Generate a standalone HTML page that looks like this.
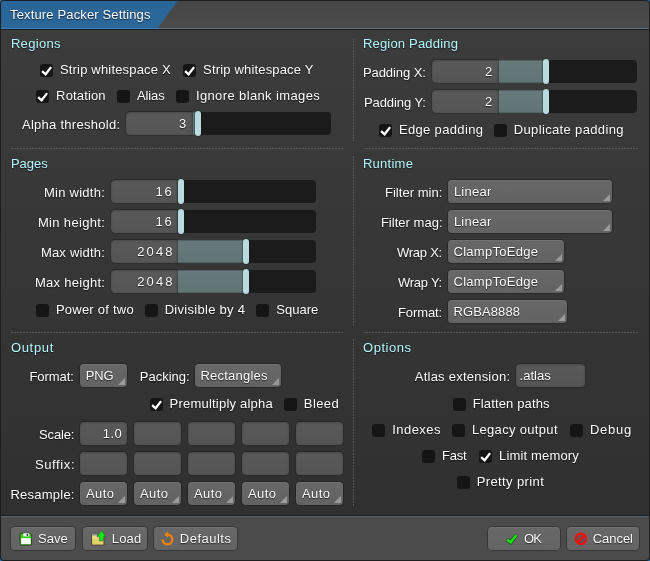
<!DOCTYPE html>
<html><head><meta charset="utf-8"><title>Texture Packer Settings</title>
<style>
html,body{margin:0;padding:0;background:#2c6ea6;}
body{width:650px;height:561px;position:relative;overflow:hidden;font-family:"Liberation Sans",sans-serif;font-size:13px;}
#win{position:absolute;left:0;top:0;width:650px;height:561px;background:#1e1e1e;border-radius:4px;overflow:hidden;}
#tb{position:absolute;left:1px;top:1px;width:648px;height:27px;background:linear-gradient(#464646,#4c4c4c);border-radius:3px 3px 0 0;}
#tbl{position:absolute;left:1px;top:28px;width:648px;height:1px;background:#626f7a;}
#tbb{position:absolute;left:0;top:0;width:180px;height:29px;}
#main{position:absolute;left:1px;top:30px;width:648px;height:485px;background:linear-gradient(#3c3c3c,#303030);}
#bar{position:absolute;left:1px;top:517px;width:648px;height:43px;background:#4b4b4b;border-radius:0 0 3px 3px;}
#barl{position:absolute;left:1px;top:516px;width:648px;height:1px;background:#59636b;}
.t{position:absolute;white-space:pre;line-height:16px;height:16px;color:#ffffff;text-shadow:0 1px 1px rgba(0,0,0,.6),0 0 1px rgba(0,0,0,.45);}
.cb{position:absolute;background:#151515;border-radius:3px;}
.cb svg{display:block}
.trk{position:absolute;background:#1b1b1b;border-radius:4px;}
.fil{position:absolute;background:linear-gradient(#67797b,#617576);box-shadow:inset 0 1px 0 #526263,inset 0 -1px 0 #526263;}
.inp{position:absolute;background:linear-gradient(#595959,#555555);border-radius:4px;box-shadow:0 0 0 1px rgba(0,0,0,.14),0 -1px 0 0 rgba(0,0,0,.12),inset 0 1px 2px rgba(0,0,0,.14),inset 0 0 2px rgba(0,0,0,.10);}
.inp.sl{border-radius:4px 0 0 4px;box-shadow:0 0 0 1px rgba(0,0,0,.14),0 -1px 0 0 rgba(0,0,0,.12),inset 0 1px 2px rgba(0,0,0,.14),inset 0 0 2px rgba(0,0,0,.10),1px 0 0 0 rgba(0,0,0,.28);}
.knb{position:absolute;background:#badadf;border-radius:3px;box-shadow:0 0 1px 0.5px rgba(20,30,30,.6);}
.sel{position:absolute;background:linear-gradient(#676767,#636363);border-radius:4px;box-shadow:0 0 0 1px rgba(0,0,0,.24),inset 0 1px 0 rgba(255,255,255,.07);}
.sel i{position:absolute;right:2px;bottom:2px;width:0;height:0;border-left:7px solid transparent;border-bottom:7px solid #9b9b9b;}
.btn{position:absolute;background:linear-gradient(#686868,#646464);border-radius:4px;box-shadow:0 0 0 1px rgba(0,0,0,.26),inset 0 1px 0 rgba(255,255,255,.07);}
.hd{position:absolute;height:1px;background-image:linear-gradient(90deg,#5a5a5a 0,#5a5a5a 66.66%,transparent 66.67%);background-size:3px 1px;}
.vd{position:absolute;width:1px;background-image:linear-gradient(180deg,#5a5a5a 0,#5a5a5a 66.66%,transparent 66.67%);background-size:1px 3px;}
.ic{position:absolute;}
#tx{position:absolute;left:0;top:0;width:650px;height:561px;will-change:transform;}
</style></head>
<body>
<div id="win">
<div id="tb"></div>
<svg id="tbb" viewBox="0 0 180 29"><path d="M1 4 Q1 1 4 1 H177.5 L158 28 H1 Z" fill="#2a6698"/><path d="M1 28 H158 L157.3 29 H1 Z" fill="#3a84c2"/></svg>
<div id="tbl"></div>
<svg style="position:absolute;left:0;top:28px" width="160" height="1"><rect x="1" y="0" width="157.5" height="1" fill="#3a84c2"/></svg>
<div id="main"></div>
<div id="barl"></div>
<div id="bar"></div>
<div class="cb" style="left:40px;top:64px;width:13px;height:13px;"><svg width="13" height="13" viewBox="0 0 13 13"><path d="M2.1 7.1 L5.6 10.3 L11.1 3.1" fill="none" stroke="#fff" stroke-width="2.3" stroke-linecap="butt" stroke-linejoin="miter"/></svg></div>
<div class="cb" style="left:183px;top:64px;width:13px;height:13px;"><svg width="13" height="13" viewBox="0 0 13 13"><path d="M2.1 7.1 L5.6 10.3 L11.1 3.1" fill="none" stroke="#fff" stroke-width="2.3" stroke-linecap="butt" stroke-linejoin="miter"/></svg></div>
<div class="cb" style="left:36px;top:90px;width:13px;height:13px;"><svg width="13" height="13" viewBox="0 0 13 13"><path d="M2.1 7.1 L5.6 10.3 L11.1 3.1" fill="none" stroke="#fff" stroke-width="2.3" stroke-linecap="butt" stroke-linejoin="miter"/></svg></div>
<div class="cb" style="left:117px;top:90px;width:13px;height:13px;"></div>
<div class="cb" style="left:176px;top:90px;width:13px;height:13px;"></div>
<div class="trk" style="left:126px;top:112px;width:205px;height:23px;"></div>
<div class="fil" style="left:192px;top:112px;width:6px;height:23px;"></div>
<div class="inp sl" style="left:126px;top:112px;width:66px;height:23px;"></div>
<div class="knb" style="left:195px;top:111px;width:6px;height:25px;"></div>
<div class="trk" style="left:111px;top:180px;width:205px;height:23px;"></div>
<div class="fil" style="left:177px;top:180px;width:4px;height:23px;"></div>
<div class="inp sl" style="left:111px;top:180px;width:66px;height:23px;"></div>
<div class="knb" style="left:178px;top:179px;width:6px;height:25px;"></div>
<div class="trk" style="left:111px;top:210px;width:205px;height:23px;"></div>
<div class="fil" style="left:177px;top:210px;width:4px;height:23px;"></div>
<div class="inp sl" style="left:111px;top:210px;width:66px;height:23px;"></div>
<div class="knb" style="left:178px;top:209px;width:6px;height:25px;"></div>
<div class="trk" style="left:111px;top:240px;width:205px;height:23px;"></div>
<div class="fil" style="left:177px;top:240px;width:69px;height:23px;"></div>
<div class="inp sl" style="left:111px;top:240px;width:66px;height:23px;"></div>
<div class="knb" style="left:243px;top:239px;width:6px;height:25px;"></div>
<div class="trk" style="left:111px;top:270px;width:205px;height:23px;"></div>
<div class="fil" style="left:177px;top:270px;width:69px;height:23px;"></div>
<div class="inp sl" style="left:111px;top:270px;width:66px;height:23px;"></div>
<div class="knb" style="left:243px;top:269px;width:6px;height:25px;"></div>
<div class="cb" style="left:36px;top:304px;width:13px;height:13px;"></div>
<div class="cb" style="left:145px;top:304px;width:13px;height:13px;"></div>
<div class="cb" style="left:256px;top:304px;width:13px;height:13px;"></div>
<div class="sel" style="left:80px;top:364px;width:47px;height:23px;"><i></i></div>
<div class="sel" style="left:195px;top:364px;width:86px;height:23px;"><i></i></div>
<div class="cb" style="left:150px;top:398px;width:13px;height:13px;"><svg width="13" height="13" viewBox="0 0 13 13"><path d="M2.1 7.1 L5.6 10.3 L11.1 3.1" fill="none" stroke="#fff" stroke-width="2.3" stroke-linecap="butt" stroke-linejoin="miter"/></svg></div>
<div class="cb" style="left:284px;top:398px;width:13px;height:13px;"></div>
<div class="inp" style="left:80px;top:422px;width:47px;height:23px;"></div>
<div class="inp" style="left:80px;top:452px;width:47px;height:23px;"></div>
<div class="sel" style="left:80px;top:482px;width:47px;height:23px;"><i></i></div>
<div class="inp" style="left:134px;top:422px;width:47px;height:23px;"></div>
<div class="inp" style="left:134px;top:452px;width:47px;height:23px;"></div>
<div class="sel" style="left:134px;top:482px;width:47px;height:23px;"><i></i></div>
<div class="inp" style="left:188px;top:422px;width:47px;height:23px;"></div>
<div class="inp" style="left:188px;top:452px;width:47px;height:23px;"></div>
<div class="sel" style="left:188px;top:482px;width:47px;height:23px;"><i></i></div>
<div class="inp" style="left:242px;top:422px;width:47px;height:23px;"></div>
<div class="inp" style="left:242px;top:452px;width:47px;height:23px;"></div>
<div class="sel" style="left:242px;top:482px;width:47px;height:23px;"><i></i></div>
<div class="inp" style="left:296px;top:422px;width:47px;height:23px;"></div>
<div class="inp" style="left:296px;top:452px;width:47px;height:23px;"></div>
<div class="sel" style="left:296px;top:482px;width:47px;height:23px;"><i></i></div>
<div class="trk" style="left:432px;top:60px;width:205px;height:23px;"></div>
<div class="fil" style="left:498px;top:60px;width:48px;height:23px;"></div>
<div class="inp sl" style="left:432px;top:60px;width:66px;height:23px;"></div>
<div class="knb" style="left:543px;top:59px;width:6px;height:25px;"></div>
<div class="trk" style="left:432px;top:90px;width:205px;height:23px;"></div>
<div class="fil" style="left:498px;top:90px;width:48px;height:23px;"></div>
<div class="inp sl" style="left:432px;top:90px;width:66px;height:23px;"></div>
<div class="knb" style="left:543px;top:89px;width:6px;height:25px;"></div>
<div class="cb" style="left:379px;top:124px;width:13px;height:13px;"><svg width="13" height="13" viewBox="0 0 13 13"><path d="M2.1 7.1 L5.6 10.3 L11.1 3.1" fill="none" stroke="#fff" stroke-width="2.3" stroke-linecap="butt" stroke-linejoin="miter"/></svg></div>
<div class="cb" style="left:494px;top:124px;width:13px;height:13px;"></div>
<div class="sel" style="left:448px;top:180px;width:164px;height:23px;"><i></i></div>
<div class="sel" style="left:448px;top:210px;width:164px;height:23px;"><i></i></div>
<div class="sel" style="left:448px;top:240px;width:116px;height:23px;"><i></i></div>
<div class="sel" style="left:448px;top:270px;width:116px;height:23px;"><i></i></div>
<div class="sel" style="left:448px;top:300px;width:119px;height:23px;"><i></i></div>
<div class="inp" style="left:516px;top:364px;width:69px;height:23px;"></div>
<div class="cb" style="left:453px;top:398px;width:13px;height:13px;"></div>
<div class="cb" style="left:372px;top:424px;width:13px;height:13px;"></div>
<div class="cb" style="left:452px;top:424px;width:13px;height:13px;"></div>
<div class="cb" style="left:570px;top:424px;width:13px;height:13px;"></div>
<div class="cb" style="left:422px;top:450px;width:13px;height:13px;"></div>
<div class="cb" style="left:479px;top:450px;width:13px;height:13px;"><svg width="13" height="13" viewBox="0 0 13 13"><path d="M2.1 7.1 L5.6 10.3 L11.1 3.1" fill="none" stroke="#fff" stroke-width="2.3" stroke-linecap="butt" stroke-linejoin="miter"/></svg></div>
<div class="cb" style="left:457px;top:476px;width:13px;height:13px;"></div>
<div class="btn" style="left:11px;top:527px;width:64px;height:23px;"></div>
<div class="btn" style="left:83px;top:527px;width:64px;height:23px;"></div>
<div class="btn" style="left:154px;top:527px;width:83px;height:23px;"></div>
<div class="btn" style="left:488px;top:527px;width:72px;height:23px;"></div>
<div class="btn" style="left:567px;top:527px;width:72px;height:23px;"></div>
<div class="hd" style="left:11px;top:148px;width:332px;background-position:0px 0"></div>
<div class="hd" style="left:364px;top:148px;width:274px;background-position:-1px 0"></div>
<div class="hd" style="left:11px;top:332px;width:332px;background-position:0px 0"></div>
<div class="hd" style="left:364px;top:332px;width:274px;background-position:-1px 0"></div>
<div class="vd" style="left:353px;top:39px;height:102px;background-position:0 -1px"></div>
<div class="vd" style="left:353px;top:156px;height:170px;background-position:0 0px"></div>
<div class="vd" style="left:353px;top:339px;height:168px;background-position:0 0px"></div>

<svg class="ic" style="left:19px;top:531.6px" width="15" height="15" viewBox="0 0 15 15">
<path d="M2.1 1.3 H11 L12.6 2.9 V13.1 H1.1 V2.3 Q1.1 1.3 2.1 1.3 Z" fill="#3cd01c" stroke="#26421f" stroke-width="1"/>
<rect x="2.1" y="6.2" width="9.6" height="5.9" fill="#ffffff"/>
<rect x="4.3" y="1.2" width="5.9" height="3.2" fill="#f0f0f0"/>
<rect x="7.7" y="1.8" width="1.4" height="2.2" fill="#2a4a2a"/>
</svg>
<svg class="ic" style="left:90px;top:529px" width="18" height="18" viewBox="0 0 18 18">
<path d="M1.6 5.6 H7 V6.6 H14 V16.1 H1.6 Z" fill="#ddd36a" stroke="#45453a" stroke-width="1"/>
<rect x="2.1" y="6.6" width="11.4" height="3" fill="#e9e081"/>
<rect x="2" y="5" width="5" height="1.4" fill="#8a8fb0"/>
<path d="M11.4 1.5 L16 7.8 H13.3 V11.8 H9.6 V7.8 H7 Z" fill="#12ee12" stroke="#2a5a2a" stroke-width="0.6"/>
</svg>
<svg class="ic" style="left:160px;top:530px" width="16" height="17" viewBox="0 0 16 17">
<path d="M7.5 4.7 A4.8 4.8 0 1 1 2.7 9.5" fill="none" stroke="#ff8000" stroke-width="2.2"/>
<path d="M8.1 1.4 L4.1 4.7 L8.1 7.5 Z" fill="#ff8000"/>
</svg>
<svg class="ic" style="left:504px;top:532px" width="16" height="14" viewBox="0 0 16 14">
<path d="M3 7.2 L6.7 10.5 L12.6 2.8" fill="none" stroke="#1c4a1c" stroke-width="3.8"/>
<path d="M3.2 7.4 L6.7 10.4 L12.4 3.0" fill="none" stroke="#14e014" stroke-width="2.7"/>
</svg>
<svg class="ic" style="left:574px;top:532px" width="14" height="14" viewBox="0 0 14 14">
<circle cx="7" cy="6.8" r="5.2" fill="#585858" stroke="#ff0a0a" stroke-width="2.2"/>
<path d="M3.4 10.4 L10.6 3.2" stroke="#ff0a0a" stroke-width="2.2"/>
</svg>

<div id="tx">
<span class="t ttl" style="left:10.1px;top:7.0px;letter-spacing:0.14px;">Texture Packer Settings</span>
<span class="t" style="left:10.9px;top:36.0px;letter-spacing:0.32px;color:#b6fbff;">Regions</span>
<span class="t" style="left:60.0px;top:62.0px;letter-spacing:0.17px;">Strip whitespace X</span>
<span class="t" style="left:203.1px;top:62.0px;letter-spacing:0.17px;">Strip whitespace Y</span>
<span class="t" style="left:56.1px;top:88.0px;letter-spacing:0.15px;">Rotation</span>
<span class="t" style="left:137.0px;top:88.0px;letter-spacing:-0.12px;">Alias</span>
<span class="t" style="left:195.9px;top:88.0px;letter-spacing:0.38px;">Ignore blank images</span>
<span class="t" style="left:22.0px;top:117.0px;letter-spacing:0.27px;">Alpha threshold:</span>
<span class="t" style="left:179.0px;top:116.0px;">3</span>
<span class="t" style="left:10.9px;top:156.0px;letter-spacing:0.03px;color:#b6fbff;">Pages</span>
<span class="t" style="left:43.9px;top:185.0px;letter-spacing:0.27px;">Min width:</span>
<span class="t" style="left:37.9px;top:215.0px;letter-spacing:0.34px;">Min height:</span>
<span class="t" style="left:40.9px;top:245.0px;letter-spacing:0.21px;">Max width:</span>
<span class="t" style="left:35.0px;top:275.0px;letter-spacing:0.27px;">Max height:</span>
<span class="t" style="left:155.5px;top:184.0px;letter-spacing:1.83px;">16</span>
<span class="t" style="left:155.5px;top:214.0px;letter-spacing:1.83px;">16</span>
<span class="t" style="left:137.3px;top:244.0px;letter-spacing:2.09px;">2048</span>
<span class="t" style="left:137.3px;top:274.0px;letter-spacing:2.09px;">2048</span>
<span class="t" style="left:55.9px;top:302.0px;letter-spacing:0.24px;">Power of two</span>
<span class="t" style="left:164.7px;top:302.0px;letter-spacing:0.29px;">Divisible by 4</span>
<span class="t" style="left:276.2px;top:302.0px;letter-spacing:0.04px;">Square</span>
<span class="t" style="left:10.9px;top:340.0px;letter-spacing:0.69px;color:#b6fbff;">Output</span>
<span class="t" style="left:29.5px;top:369.0px;letter-spacing:-0.07px;">Format:</span>
<span class="t" style="left:85.7px;top:368.0px;letter-spacing:-0.09px;">PNG</span>
<span class="t" style="left:139.7px;top:369.0px;letter-spacing:0.02px;">Packing:</span>
<span class="t" style="left:200.5px;top:368.0px;letter-spacing:0.22px;">Rectangles</span>
<span class="t" style="left:169.5px;top:396.0px;letter-spacing:0.22px;">Premultiply alpha</span>
<span class="t" style="left:303.8px;top:396.0px;letter-spacing:0.41px;">Bleed</span>
<span class="t" style="left:39.0px;top:427.0px;letter-spacing:-0.13px;">Scale:</span>
<span class="t" style="left:102.8px;top:426.0px;letter-spacing:0.46px;">1.0</span>
<span class="t" style="left:34.9px;top:457.0px;letter-spacing:0.62px;">Suffix:</span>
<span class="t" style="left:10.5px;top:487.0px;letter-spacing:0.23px;">Resample:</span>
<span class="t" style="left:85.9px;top:486.0px;letter-spacing:0.45px;">Auto</span>
<span class="t" style="left:139.9px;top:486.0px;letter-spacing:0.45px;">Auto</span>
<span class="t" style="left:193.9px;top:486.0px;letter-spacing:0.45px;">Auto</span>
<span class="t" style="left:247.9px;top:486.0px;letter-spacing:0.45px;">Auto</span>
<span class="t" style="left:301.9px;top:486.0px;letter-spacing:0.45px;">Auto</span>
<span class="t" style="left:362.9px;top:36.0px;letter-spacing:0.19px;color:#b6fbff;">Region Padding</span>
<span class="t" style="left:362.9px;top:65.0px;letter-spacing:-0.07px;">Padding X:</span>
<span class="t" style="left:363.9px;top:95.0px;letter-spacing:-0.07px;">Padding Y:</span>
<span class="t" style="left:485.0px;top:64.0px;">2</span>
<span class="t" style="left:485.0px;top:94.0px;">2</span>
<span class="t" style="left:398.9px;top:122.0px;letter-spacing:0.35px;">Edge padding</span>
<span class="t" style="left:513.8px;top:122.0px;letter-spacing:0.35px;">Duplicate padding</span>
<span class="t" style="left:362.9px;top:156.0px;letter-spacing:0.26px;color:#b6fbff;">Runtime</span>
<span class="t" style="left:384.9px;top:185.0px;letter-spacing:0.05px;">Filter min:</span>
<span class="t" style="left:380.9px;top:215.0px;letter-spacing:0.02px;">Filter mag:</span>
<span class="t" style="left:397.0px;top:245.0px;letter-spacing:-0.25px;">Wrap X:</span>
<span class="t" style="left:398.0px;top:275.0px;letter-spacing:-0.26px;">Wrap Y:</span>
<span class="t" style="left:398.0px;top:305.0px;letter-spacing:-0.1px;">Format:</span>
<span class="t" style="left:453.9px;top:184.0px;letter-spacing:0.25px;">Linear</span>
<span class="t" style="left:453.9px;top:214.0px;letter-spacing:0.25px;">Linear</span>
<span class="t" style="left:453.5px;top:244.0px;letter-spacing:0.28px;">ClampToEdge</span>
<span class="t" style="left:453.5px;top:274.0px;letter-spacing:0.28px;">ClampToEdge</span>
<span class="t" style="left:453.5px;top:304.0px;letter-spacing:0.1px;">RGBA8888</span>
<span class="t" style="left:363.1px;top:340.0px;letter-spacing:0.5px;color:#b6fbff;">Options</span>
<span class="t" style="left:414.8px;top:369.0px;letter-spacing:0.23px;">Atlas extension:</span>
<span class="t" style="left:519.5px;top:368.0px;letter-spacing:0.04px;">.atlas</span>
<span class="t" style="left:472.7px;top:396.0px;letter-spacing:0.14px;">Flatten paths</span>
<span class="t" style="left:392.2px;top:422.0px;letter-spacing:0.46px;">Indexes</span>
<span class="t" style="left:471.9px;top:422.0px;letter-spacing:0.33px;">Legacy output</span>
<span class="t" style="left:589.9px;top:422.0px;letter-spacing:0.77px;">Debug</span>
<span class="t" style="left:442.0px;top:448.0px;letter-spacing:-0.23px;">Fast</span>
<span class="t" style="left:499.0px;top:448.0px;letter-spacing:0.16px;">Limit memory</span>
<span class="t" style="left:476.7px;top:474.0px;letter-spacing:0.39px;">Pretty print</span>
<span class="t" style="left:38.0px;top:531.0px;letter-spacing:0.05px;">Save</span>
<span class="t" style="left:111.7px;top:531.0px;letter-spacing:0.23px;">Load</span>
<span class="t" style="left:179.8px;top:531.0px;letter-spacing:0.49px;">Defaults</span>
<span class="t" style="left:524.0px;top:531.0px;letter-spacing:-0.8px;">OK</span>
<span class="t" style="left:592.7px;top:531.0px;letter-spacing:-0.03px;">Cancel</span>
</div>
</div>
</body></html>
